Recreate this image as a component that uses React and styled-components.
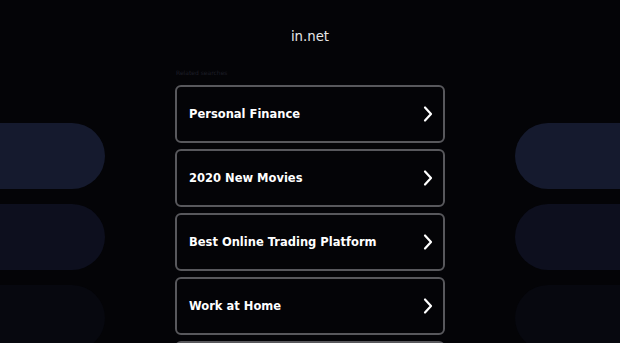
import styled, { createGlobalStyle } from "styled-components";

const GlobalStyle = createGlobalStyle`
  html, body {
    margin: 0;
    padding: 0;
    background: #040407;
    overflow: hidden;
  }
  * {
    box-sizing: border-box;
  }
`;

const links = [
  "Personal Finance",
  "2020 New Movies",
  "Best Online Trading Platform",
  "Work at Home",
  "Online Courses",
];

const pillColors = ["#151a2e", "#0d0f1e", "#07080f"];

const Chevron = () => (
  <svg width="12" height="18" viewBox="0 0 12 18" fill="none">
    <path
      d="M3 2.5l6 6.5-6 6.5"
      stroke="#ffffff"
      strokeWidth="2.2"
      strokeLinecap="round"
      strokeLinejoin="round"
    />
  </svg>
);

const App = () => {
  return (
    <>
      <GlobalStyle />
      <Page>
        <Header>in.net</Header>
        <Body>
          <Side $side="left">
            {pillColors.map((c) => (
              <Pill key={c} $color={c} $side="left" />
            ))}
          </Side>
          <Center>
            <Related>Related searches</Related>
            <List>
              {links.map((label) => (
                <Card key={label} href="#">
                  <span>{label}</span>
                  <Chevron />
                </Card>
              ))}
            </List>
          </Center>
          <Side $side="right">
            {pillColors.map((c) => (
              <Pill key={c} $color={c} $side="right" />
            ))}
          </Side>
        </Body>
      </Page>
    </>
  );
};

export default App;

const Page = styled.main`
  width: 620px;
  height: 343px;
  overflow: hidden;
  font-family: "DejaVu Sans", Verdana, sans-serif;
`;

const Header = styled.h1`
  margin: 0;
  height: 74px;
  padding-top: 28px;
  text-align: center;
  font-size: 13.3px;
  font-weight: normal;
  color: #e6e6e6;
  line-height: 18px;
`;

const Body = styled.div`
  display: flex;
  margin-top: -12px;
`;

const Side = styled.div`
  flex: 1;
  display: flex;
  flex-direction: column;
  align-items: ${({ $side }) => ($side === "left" ? "flex-start" : "flex-end")};
  gap: 15px;
  padding-top: 61px;
`;

const Pill = styled.div`
  width: 140px;
  height: 66px;
  flex-shrink: 0;
  background: ${({ $color }) => $color};
  border-radius: 33px;
  margin-left: ${({ $side }) => ($side === "left" ? "-35px" : "0")};
  margin-right: ${({ $side }) => ($side === "right" ? "-35px" : "0")};
`;

const Center = styled.section`
  width: 270px;
  display: flex;
  flex-direction: column;
`;

const Related = styled.div`
  height: 23px;
  padding-top: 6px;
  padding-left: 1px;
  font-size: 6px;
  line-height: 10px;
  color: #1e1f28;
`;

const List = styled.div`
  display: flex;
  flex-direction: column;
  gap: 6px;
`;

const Card = styled.a`
  height: 58px;
  flex-shrink: 0;
  display: flex;
  align-items: center;
  justify-content: space-between;
  padding: 0 9px 0 12px;
  border: 2px solid #58585c;
  border-radius: 6px;
  background: #040407;
  color: #ffffff;
  text-decoration: none;
  font-size: 11.5px;
  font-weight: bold;
`;
